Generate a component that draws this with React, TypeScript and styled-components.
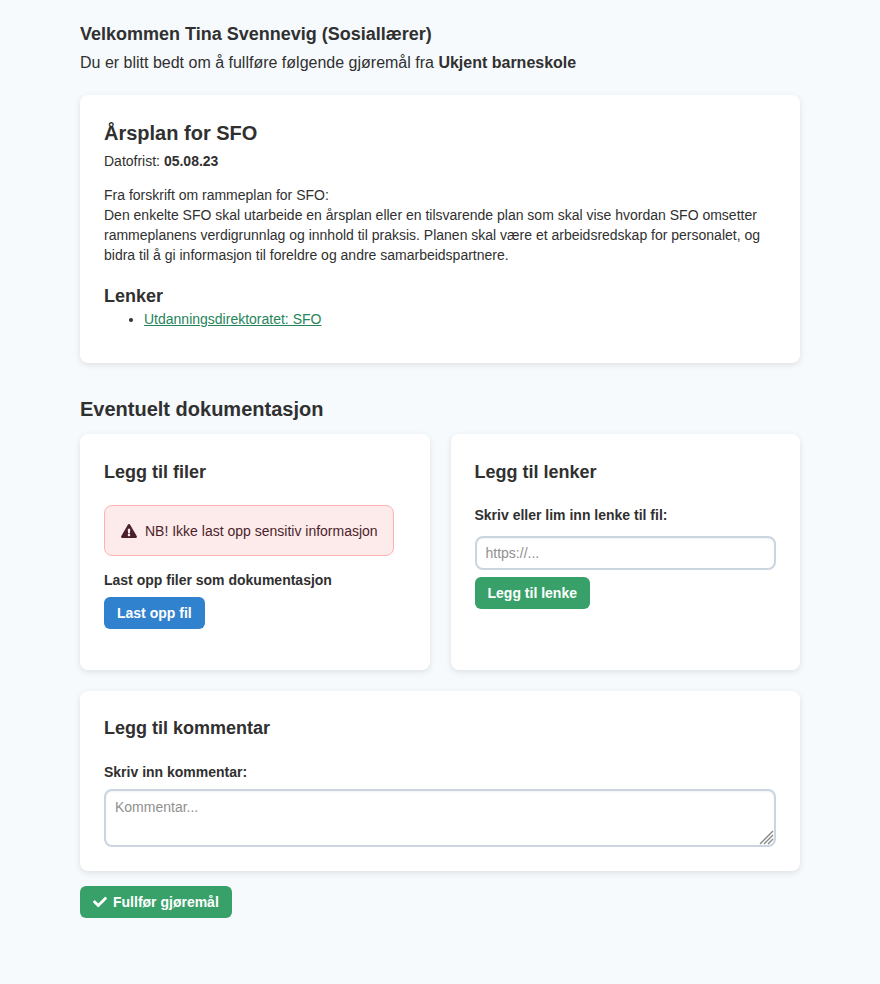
import React from 'react';
import styled, { createGlobalStyle } from 'styled-components';

const Global = createGlobalStyle`
  *, *::before, *::after { box-sizing: border-box; }
  html { background: #f6fafd; }
  body {
    margin: 0;
    color: #303030;
    font-family: "Liberation Sans", Arial, sans-serif;
    font-size: 14px;
    line-height: 20px;
  }
  h1, h2, h3, p, ul { margin: 0; }
  button, input, textarea { font: inherit; color: inherit; }
`;

const Page = styled.main`
  max-width: 768px;
  margin: 0 auto;
  padding: 20px 24px 66px;
`;

const Intro = styled.header`
  margin-bottom: 17px;
  font-size: 16px;
  line-height: 30px;
`;

const Welcome = styled.h1`
  font-size: 18px;
  line-height: 28px;
`;

const Card = styled.section`
  padding: 24px;
  background: #fff;
  border-radius: 8px;
  box-shadow: 0 2px 6px rgba(0, 0, 0, 0.1);
`;

const TaskCard = styled(Card)`
  padding-bottom: 34px;
`;

const CommentCard = styled(Card)`
  padding-top: 23px;
`;

const Title = styled.h2`
  font-size: 20px;
  line-height: 28px;
`;

const SectionTitle = styled(Title)`
  margin: 32px 0 11px;
`;

const Subtitle = styled.h3`
  font-size: 18px;
  line-height: 28px;
`;

const Deadline = styled.p`
  margin: 4px 0 14px;
`;

const LinksTitle = styled(Subtitle)`
  margin-top: 18px;
  line-height: 26px;
`;

const LinkList = styled.ul`
  padding-left: 40px;
`;

const Link = styled.a`
  color: #25855a;
`;

const Columns = styled.div`
  display: grid;
  grid-template-columns: 1fr 1fr;
  gap: 21px;
  margin-bottom: 21px;
`;

const Upload = styled(Card)`
  display: flex;
  flex-direction: column;
  align-items: flex-start;
  padding-bottom: 41px;
`;

const Alert = styled.div`
  display: flex;
  align-items: center;
  gap: 8px;
  margin: 19px 0 14px;
  padding: 15px 15px 14px 16px;
  border: 1px solid #feb2b2;
  border-radius: 8px;
  background: #fdeaea;
  color: #4a1f2b;
`;

const Label = styled.label`
  display: block;
  font-weight: 700;
`;

const LinkLabel = styled(Label)`
  margin: 19px 0 11px;
`;

const CommentLabel = styled(Label)`
  margin: 20px 0 7px;
`;

const Caption = styled.p`
  margin-bottom: 7px;
  font-weight: 700;
`;

const Button = styled.button<{ $tone: 'blue' | 'green' }>`
  display: inline-flex;
  align-items: center;
  gap: 6px;
  height: 32px;
  padding: 0 13px;
  border: 0;
  border-radius: 6px;
  background: ${({ $tone }) => ($tone === 'blue' ? '#3182ce' : '#38a169')};
  color: #fff;
  font-weight: 700;
  cursor: pointer;
`;

const TextInput = styled.input`
  display: block;
  width: 100%;
  height: 34px;
  margin-bottom: 7px;
  padding: 0 9px;
  border: 2px solid #cbd5e0;
  border-radius: 8px;
  background: #fff;
  box-shadow: inset 0 1px 2px rgba(0, 0, 0, 0.05);
  &::placeholder { color: #909090; opacity: 1; }
`;

const gripImage =
  "url(\"data:image/svg+xml,%3Csvg xmlns='http://www.w3.org/2000/svg' width='15' height='15'%3E%3Cpath d='M1 14 14 1M5 14 14 5M9 14 14 9' stroke='%23888' stroke-width='1.4'/%3E%3C/svg%3E\")";

const Comment = styled.textarea`
  display: block;
  width: 100%;
  height: 58px;
  padding: 6px 9px;
  border: 2px solid #cbd5e0;
  border-radius: 8px;
  box-shadow: inset 0 1px 2px rgba(0, 0, 0, 0.05);
  resize: vertical;
  &::placeholder { color: #909090; opacity: 1; }
  &::-webkit-resizer { background: ${gripImage} no-repeat; }
`;

const Finish = styled.footer`
  margin-top: 15px;
`;

const WarningIcon = () => (
  <svg width="16" height="14" viewBox="0 0 576 512" fill="currentColor" aria-hidden="true">
    <path d="M569.517 440.013C587.975 472.007 564.806 512 527.94 512H48.054c-36.937 0-59.999-40.055-41.577-71.987L246.423 23.985c18.467-32.009 64.72-31.951 83.154 0l239.94 416.028zM288 354c-25.405 0-46 20.595-46 46s20.595 46 46 46 46-20.595 46-46-20.595-46-46-46zm-43.673-165.346l7.418 136c.347 6.364 5.609 11.346 11.982 11.346h48.546c6.373 0 11.635-4.982 11.982-11.346l7.418-136c.375-6.874-5.098-12.654-11.982-12.654h-63.383c-6.884 0-12.356 5.78-11.981 12.654z" />
  </svg>
);

const CheckIcon = () => (
  <svg width="14" height="14" viewBox="0 0 512 512" fill="currentColor" aria-hidden="true">
    <path d="M173.898 439.404l-166.4-166.4c-9.997-9.997-9.997-26.206 0-36.204l36.203-36.204c9.997-9.998 26.207-9.998 36.204 0L192 312.69 432.095 72.596c9.997-9.997 26.207-9.997 36.204 0l36.203 36.204c9.997 9.997 9.997 26.206 0 36.204l-294.4 294.401c-9.998 9.997-26.207 9.997-36.204-.001z" />
  </svg>
);

export default function App() {
  return (
    <>
      <Global />
      <Page>
        <Intro>
          <Welcome>Velkommen Tina Svennevig (Sosiallærer)</Welcome>
          <p>Du er blitt bedt om å fullføre følgende gjøremål fra <strong>Ukjent barneskole</strong></p>
        </Intro>
        <TaskCard>
          <Title>Årsplan for SFO</Title>
          <Deadline>Datofrist: <strong>05.08.23</strong></Deadline>
          <p>Fra forskrift om rammeplan for SFO:</p>
          <p>Den enkelte SFO skal utarbeide en årsplan eller en tilsvarende plan som skal vise hvordan SFO omsetter rammeplanens verdigrunnlag og innhold til praksis. Planen skal være et arbeidsredskap for personalet, og bidra til å gi informasjon til foreldre og andre samarbeidspartnere.</p>
          <LinksTitle>Lenker</LinksTitle>
          <LinkList>
            <li><Link href="#sfo">Utdanningsdirektoratet: SFO</Link></li>
          </LinkList>
        </TaskCard>
        <SectionTitle>Eventuelt dokumentasjon</SectionTitle>
        <Columns>
          <Upload>
            <Subtitle>Legg til filer</Subtitle>
            <Alert role="note"><WarningIcon />NB! Ikke last opp sensitiv informasjon</Alert>
            <Caption id="upload-caption">Last opp filer som dokumentasjon</Caption>
            <Button type="button" $tone="blue" aria-describedby="upload-caption">Last opp fil</Button>
          </Upload>
          <Card>
            <Subtitle>Legg til lenker</Subtitle>
            <LinkLabel htmlFor="file-link">Skriv eller lim inn lenke til fil:</LinkLabel>
            <TextInput id="file-link" type="url" placeholder="https://..." />
            <Button type="button" $tone="green">Legg til lenke</Button>
          </Card>
        </Columns>
        <CommentCard>
          <Subtitle>Legg til kommentar</Subtitle>
          <CommentLabel htmlFor="comment">Skriv inn kommentar:</CommentLabel>
          <Comment id="comment" placeholder="Kommentar..." />
        </CommentCard>
        <Finish>
          <Button type="submit" $tone="green"><CheckIcon />Fullfør gjøremål</Button>
        </Finish>
      </Page>
    </>
  );
}
